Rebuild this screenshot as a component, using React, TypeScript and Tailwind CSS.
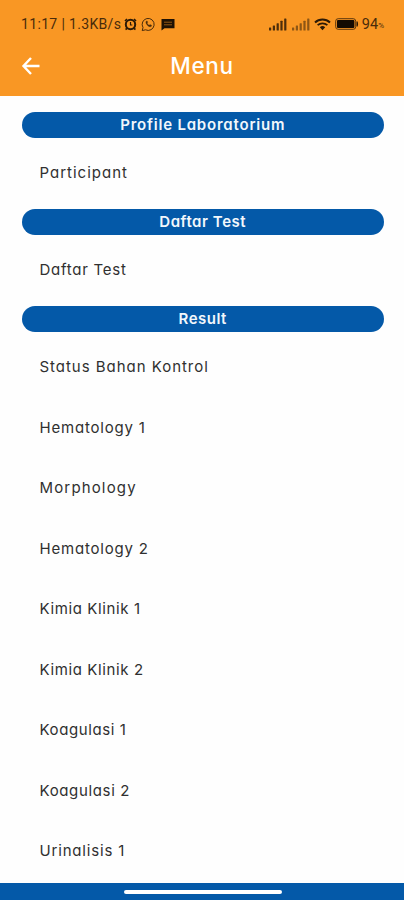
import React from "react";

const sections = [
  {
    title: "Profile Laboratorium",
    tracking: "tracking-[0.8px]",
    items: [{ label: "Participant", tracking: "tracking-[1px]" }],
  },
  {
    title: "Daftar Test",
    tracking: "tracking-[0.55px]",
    items: [{ label: "Daftar Test", tracking: "tracking-[0.75px]" }],
  },
  {
    title: "Result",
    tracking: "tracking-[0.5px]",
    items: [
      { label: "Status Bahan Kontrol", tracking: "tracking-[0.97px]" },
      { label: "Hematology 1", tracking: "tracking-[0.8px]" },
      { label: "Morphology", tracking: "tracking-[1.15px]" },
      { label: "Hematology 2", tracking: "tracking-[0.8px]" },
      { label: "Kimia Klinik 1", tracking: "tracking-[0.62px]" },
      { label: "Kimia Klinik 2", tracking: "tracking-[0.62px]" },
      { label: "Koagulasi 1", tracking: "tracking-[0.6px]" },
      { label: "Koagulasi 2", tracking: "tracking-[0.65px]" },
      { label: "Urinalisis 1", tracking: "tracking-[0.82px]" },
    ],
  },
];

function Signal({ className }: { className: string }) {
  return (
    <svg className={className} width="18" height="13" viewBox="0 0 18 13" fill="currentColor">
      <rect x="0" y="9.5" width="2.2" height="3" rx="0.5" />
      <rect x="3.8" y="7.5" width="2.2" height="5" rx="0.5" />
      <rect x="7.6" y="5.2" width="2.2" height="7.3" rx="0.5" />
      <rect x="11.4" y="2.8" width="2.2" height="9.7" rx="0.5" />
      <rect x="15.2" y="0.5" width="2.2" height="12" rx="0.5" />
    </svg>
  );
}

function StatusBar() {
  return (
    <div className="flex h-12 items-center justify-between pl-[21px] pr-[20px] text-[#4a2c0b]">
      <div className="flex items-center">
        <span className="w-[102.5px] whitespace-nowrap font-['Roboto',sans-serif] text-[14px] tracking-[0.34px]">
          11:17 | 1.3KB/s
        </span>
        <svg width="13" height="13" viewBox="0 0 13 13" fill="none" stroke="#2c1a06">
          <circle cx="6.5" cy="6.5" r="4.7" strokeWidth="2" />
          <path d="M6.5 4v3h1.8" strokeWidth="1.2" />
          <path d="M1 3 3 1M12 3 10 1M1.5 11.5l1.5-1M11.5 11.5l-1.5-1" strokeWidth="1.6" />
        </svg>
        <svg className="ml-[4px]" width="15" height="15" viewBox="0 0 15 15" fill="none" stroke="currentColor">
          <path d="M1.2 13.6 2 10.5A6 6 0 1 1 4.5 12.8Z" strokeWidth="1" />
          <path d="M5.2 4.2c-1.5 1.7 2.3 6.5 5 5.4l.5-1.3-1.7-.8-.8.8C7 7.7 6.3 6.7 6.1 6l.7-.8-.7-1.3Z" fill="currentColor" strokeWidth="0.3" />
        </svg>
        <svg className="ml-[5px]" width="14" height="13" viewBox="0 0 14 13">
          <path d="M0.5 1h13v9.3H3.5L0.5 12.5Z" fill="#1f1204" />
          <path d="M3 4.2h8M3 6.8h8" stroke="#b36b18" strokeWidth="0.8" />
        </svg>
      </div>
      <div className="flex items-center">
        <Signal className="text-[#4d2e0b]" />
        <Signal className="ml-[5px] text-[#8d5615]" />
        <svg className="ml-[4px]" width="17" height="13" viewBox="0 0 17 13" fill="none" stroke="#2c1a06">
          <path d="M1 4.5a11 11 0 0 1 15 0" strokeWidth="2" />
          <path d="M3.6 7.2a7.4 7.4 0 0 1 9.8 0" strokeWidth="1.8" />
          <path d="m5.8 9.2 2.7 3 2.7-3a4 4 0 0 0-5.4 0Z" fill="#2c1a06" stroke="none" />
        </svg>
        <svg className="ml-[4px]" width="24" height="12" viewBox="0 0 24 12">
          <rect x="0.7" y="0.7" width="20" height="10.6" rx="2.5" fill="none" stroke="#5c370d" />
          <rect x="2" y="2" width="17.4" height="8" rx="1" fill="#140b02" />
          <path d="M21.5 3.5h1.2q.8 2.5 0 5h-1.2Z" fill="#2c1a06" />
        </svg>
        <span className="ml-[3px] pt-px font-['Roboto',sans-serif] text-[14.5px]">94</span>
        <span className="mt-[3px] font-['Roboto',sans-serif] text-[8px]">%</span>
      </div>
    </div>
  );
}

export default function App() {
  return (
    <div className="flex h-[900px] w-full flex-col overflow-hidden bg-[#fefefe] font-['Inter',sans-serif] [font-feature-settings:'cv11','ss03']">
      <header className="h-[96px] shrink-0 bg-[#f99724]">
        <StatusBar />
        <div className="grid h-[35px] grid-cols-[52px_1fr_52px] items-center text-white">
          <svg className="ml-[21px]" width="20" height="20" viewBox="0 0 20 20" fill="none" stroke="currentColor" strokeWidth="2.4">
            <path d="M18.5 10H2.5M10 2 2.5 10l7.5 8" />
          </svg>
          <h1 className="text-center text-[22.5px] font-medium tracking-[0.7px]">Menu</h1>
        </div>
      </header>
      <main className="min-h-0 flex-1 overflow-hidden pt-[10px] pr-[20.5px] pl-[22px]">
        {sections.map((section) => (
          <section key={section.title}>
            <h2 className="mt-[6px] mb-[4.75px] flex h-[26px] items-center justify-center rounded-full bg-[#0459a8] text-[#f2f7fc]">
              <span className={`text-[15px] font-semibold ${section.tracking}`}>{section.title}</span>
            </h2>
            {section.items.map((item) => (
              <div key={item.label} className="flex h-[60.45px] items-center pt-[0.7px] pl-[17.5px] text-[#303030]">
                <span className={`text-[15px] ${item.tracking}`}>{item.label}</span>
              </div>
            ))}
          </section>
        ))}
      </main>
      <footer className="flex h-[17px] shrink-0 justify-center bg-[#0459a8] pt-[7px]">
        <div className="ml-px h-[4px] w-[158px] rounded-full bg-white" />
      </footer>
    </div>
  );
}
